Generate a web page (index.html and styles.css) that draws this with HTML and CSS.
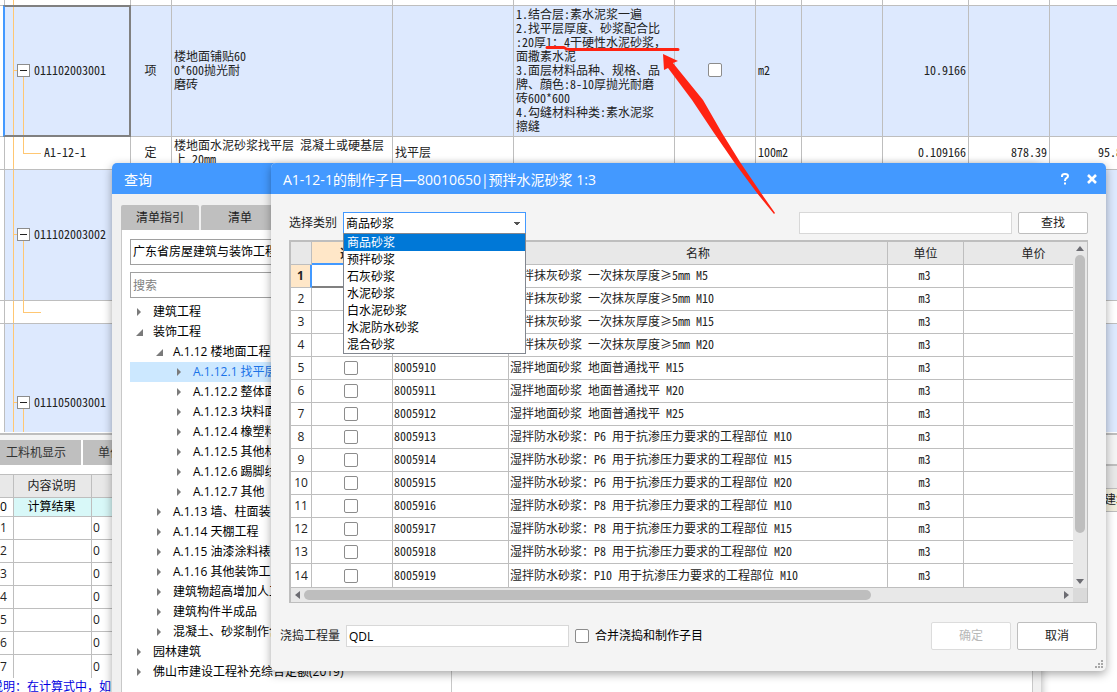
FILE: index.html
```html
<!DOCTYPE html>
<html lang="zh-CN">
<head>
<meta charset="utf-8">
<title>A1-12-1的制作子目</title>
<link rel="stylesheet" href="styles.css">
</head>
<body>
<main class="workspace">
  <div class="bill-wrap">
    <table class="bill">
      <colgroup>
        <col class="b-head"><col class="b-code"><col class="b-kind"><col class="b-name"><col class="b-spec"><col class="b-desc"><col class="b-check"><col class="b-unit"><col class="b-expr"><col class="b-qty"><col class="b-price"><col class="b-total">
      </colgroup>
      <tbody>
        <tr class="r-cut"><td></td><td class="tree"></td><td></td><td></td><td></td><td></td><td></td><td></td><td></td><td></td><td></td><td></td></tr>
        <tr class="r-item">
          <td class="current"></td>
          <td class="tree parent selected"><button class="toggle" aria-label="折叠"></button>011102003001</td>
          <td class="center">项</td>
          <td>楼地面铺贴60<br>0*600抛光耐<br>磨砖</td>
          <td></td>
          <td>1.结合层:素水泥浆一遍<br>2.找平层厚度、砂浆配合比<br>:20厚1：4干硬性水泥砂浆，<br>面撒素水泥<br>3.面层材料品种、规格、品<br>牌、顔色:8-10厚抛光耐磨<br>砖600*600<br>4.勾缝材料种类:素水泥浆<br>擦缝</td>
          <td class="center"><input type="checkbox" class="check" aria-label="011102003001"></td>
          <td>m2</td><td></td><td class="num">10.9166</td><td></td><td></td>
        </tr>
        <tr class="r-quota">
          <td></td><td class="tree child">A1-12-1</td><td class="center">定</td><td>楼地面水泥砂浆找平层 混凝土或硬基层<br>上 20mm</td><td>找平层</td><td></td><td></td><td>100m2</td><td></td><td class="num">0.109166</td><td class="num">878.39</td><td class="num">95.8</td>
        </tr>
        <tr class="r-item">
          <td></td><td class="tree parent"><button class="toggle" aria-label="折叠"></button>011102003002</td><td></td><td></td><td></td><td></td><td></td><td></td><td></td><td></td><td></td><td></td>
        </tr>
        <tr class="r-blank"><td></td><td class="tree child"></td><td></td><td></td><td></td><td></td><td></td><td></td><td></td><td></td><td></td><td></td></tr>
        <tr class="r-item r-last">
          <td></td><td class="tree parent"><button class="toggle" aria-label="折叠"></button>011105003001</td><td></td><td></td><td></td><td></td><td></td><td></td><td></td><td></td><td></td><td></td>
        </tr>
      </tbody>
    </table>
  </div>
  <div class="lower">
    <section class="lower-left">
      <div class="lower-tabs"><button class="ltab">工料机显示</button><button class="ltab">单价构成</button></div>
      <table class="calc">
        <colgroup><col class="c-row"><col class="c-text"><col></colgroup>
        <thead><tr><th></th><th>内容说明</th><th></th></tr></thead>
        <tbody>
          <tr class="result"><td>0</td><td>计算结果</td><td></td></tr>
          <tr><td>1</td><td></td><td>0</td></tr>
          <tr><td>2</td><td></td><td>0</td></tr>
          <tr><td>3</td><td></td><td>0</td></tr>
          <tr><td>4</td><td></td><td>0</td></tr>
          <tr><td>5</td><td></td><td>0</td></tr>
          <tr><td>6</td><td></td><td>0</td></tr>
          <tr><td>7</td><td></td><td>0</td></tr>
        </tbody>
      </table>
      <p class="note">说明：在计算式中，如</p>
    </section>
    <section class="lower-right">
      <div class="strip-head"></div>
      <div class="strip-row"><span>建筑</span></div>
    </section>
  </div>
</main>

<section class="window query">
  <header class="titlebar"><h2>查询</h2></header>
  <div class="query-body">
    <div class="tabs"><button class="tab">清单指引</button><button class="tab">清单</button></div>
    <div class="query-panes">
      <div class="pane-tree">
        <button class="book">广东省房屋建筑与装饰工程</button>
        <input class="find" type="text" placeholder="搜索" aria-label="搜索">
        <ul class="nodes">
          <li class="l0">建筑工程</li>
          <li class="l0 open">装饰工程</li>
          <li class="l1 open">A.1.12 楼地面工程</li>
          <li class="l2 active">A.1.12.1 找平层</li>
          <li class="l2">A.1.12.2 整体面</li>
          <li class="l2">A.1.12.3 块料面</li>
          <li class="l2">A.1.12.4 橡塑料</li>
          <li class="l2">A.1.12.5 其他材</li>
          <li class="l2">A.1.12.6 踢脚线</li>
          <li class="l2">A.1.12.7 其他</li>
          <li class="l1">A.1.13 墙、柱面装</li>
          <li class="l1">A.1.14 天棚工程</li>
          <li class="l1">A.1.15 油漆涂料裱</li>
          <li class="l1">A.1.16 其他装饰工</li>
          <li class="l1">建筑物超高增加人工</li>
          <li class="l1">建筑构件半成品</li>
          <li class="l1">混凝土、砂浆制作含</li>
          <li class="l0">园林建筑</li>
          <li class="l0">佛山市建设工程补充综合定额(2019)</li>
        </ul>
      </div>
      <div class="pane-list"></div>
    </div>
  </div>
</section>

<section class="window dialog" role="dialog" aria-labelledby="dialog-title">
  <header class="titlebar">
    <h2 id="dialog-title">A1-12-1的制作子目—80010650|预拌水泥砂浆 1:3</h2>
    <button class="winbtn" aria-label="帮助"><svg width="8" height="12" viewBox="0 0 8 12"><path d="M1 4V3Q1 1 4 1T7 3Q7 4.300 5.400 5.200Q4 6 4 8" fill="none" stroke="#fff" stroke-width="2"/><path d="M3 9.500h2v2H3z" fill="#fff"/></svg></button>
    <button class="winbtn" aria-label="关闭"><svg width="10" height="10" viewBox="0 0 10 10"><path d="M1 1L9 9M9 1L1 9" stroke="#fff" stroke-width="2.600"/></svg></button>
  </header>
  <div class="dialog-body">
    <div class="toolbar">
      <label for="kind">选择类别</label>
      <div class="combo">
        <select id="kind"><option>商品砂浆</option><option>预拌砂浆</option><option>石灰砂浆</option><option>水泥砂浆</option><option>白水泥砂浆</option><option>水泥防水砂浆</option><option>混合砂浆</option></select>
        <ul class="popup" role="listbox" aria-label="选择类别">
          <li role="option" aria-selected="true">商品砂浆</li>
          <li role="option">预拌砂浆</li>
          <li role="option">石灰砂浆</li>
          <li role="option">水泥砂浆</li>
          <li role="option">白水泥砂浆</li>
          <li role="option">水泥防水砂浆</li>
          <li role="option">混合砂浆</li>
        </ul>
      </div>
      <input class="search" type="text" aria-label="查找内容">
      <button class="btn">查找</button>
    </div>
    <div class="grid">
      <div class="grid-view">
        <table class="mix">
          <colgroup><col class="m-no"><col class="m-check"><col class="m-code"><col><col class="m-unit"><col class="m-price"></colgroup>
          <thead><tr><th></th><th class="hot">选择</th><th></th><th>名称</th><th>单位</th><th>单价</th></tr></thead>
          <tbody>
            <tr class="on"><td>1</td><td><input type="checkbox" class="check" aria-label="1"></td><td></td><td>湿拌抹灰砂浆 一次抹灰厚度≥5mm M5</td><td>m3</td><td></td></tr>
            <tr><td>2</td><td><input type="checkbox" class="check" aria-label="2"></td><td></td><td>湿拌抹灰砂浆 一次抹灰厚度≥5mm M10</td><td>m3</td><td></td></tr>
            <tr><td>3</td><td><input type="checkbox" class="check" aria-label="3"></td><td></td><td>湿拌抹灰砂浆 一次抹灰厚度≥5mm M15</td><td>m3</td><td></td></tr>
            <tr><td>4</td><td><input type="checkbox" class="check" aria-label="4"></td><td></td><td>湿拌抹灰砂浆 一次抹灰厚度≥5mm M20</td><td>m3</td><td></td></tr>
            <tr><td>5</td><td><input type="checkbox" class="check" aria-label="5"></td><td>8005910</td><td>湿拌地面砂浆 地面普通找平 M15</td><td>m3</td><td></td></tr>
            <tr><td>6</td><td><input type="checkbox" class="check" aria-label="6"></td><td>8005911</td><td>湿拌地面砂浆 地面普通找平 M20</td><td>m3</td><td></td></tr>
            <tr><td>7</td><td><input type="checkbox" class="check" aria-label="7"></td><td>8005912</td><td>湿拌地面砂浆 地面普通找平 M25</td><td>m3</td><td></td></tr>
            <tr><td>8</td><td><input type="checkbox" class="check" aria-label="8"></td><td>8005913</td><td>湿拌防水砂浆：P6 用于抗渗压力要求的工程部位 M10</td><td>m3</td><td></td></tr>
            <tr><td>9</td><td><input type="checkbox" class="check" aria-label="9"></td><td>8005914</td><td>湿拌防水砂浆：P6 用于抗渗压力要求的工程部位 M15</td><td>m3</td><td></td></tr>
            <tr><td>10</td><td><input type="checkbox" class="check" aria-label="10"></td><td>8005915</td><td>湿拌防水砂浆：P6 用于抗渗压力要求的工程部位 M20</td><td>m3</td><td></td></tr>
            <tr><td>11</td><td><input type="checkbox" class="check" aria-label="11"></td><td>8005916</td><td>湿拌防水砂浆：P8 用于抗渗压力要求的工程部位 M10</td><td>m3</td><td></td></tr>
            <tr><td>12</td><td><input type="checkbox" class="check" aria-label="12"></td><td>8005917</td><td>湿拌防水砂浆：P8 用于抗渗压力要求的工程部位 M15</td><td>m3</td><td></td></tr>
            <tr><td>13</td><td><input type="checkbox" class="check" aria-label="13"></td><td>8005918</td><td>湿拌防水砂浆：P8 用于抗渗压力要求的工程部位 M20</td><td>m3</td><td></td></tr>
            <tr><td>14</td><td><input type="checkbox" class="check" aria-label="14"></td><td>8005919</td><td>湿拌防水砂浆：P10 用于抗渗压力要求的工程部位 M10</td><td>m3</td><td></td></tr>
          </tbody>
        </table>
      </div>
      <div class="vscroll">
        <svg width="8" height="5" viewBox="0 0 8 5"><path d="M4 0L8 5H0z"/></svg>
        <div class="track"><div class="thumb"></div></div>
        <svg width="8" height="5" viewBox="0 0 8 5"><path d="M4 5L8 0H0z"/></svg>
      </div>
      <div class="hscroll">
        <svg width="5" height="8" viewBox="0 0 5 8"><path d="M0 4L5 0V8z"/></svg>
        <div class="track"><div class="thumb"></div></div>
        <svg width="5" height="8" viewBox="0 0 5 8"><path d="M5 4L0 0V8z"/></svg>
      </div>
      <div class="corner"></div>
    </div>
  </div>
  <footer class="dialog-foot">
    <label for="amount">浇捣工程量</label>
    <input id="amount" class="amount" type="text" value="QDL">
    <input id="merge" class="check" type="checkbox">
    <label for="merge" class="merge">合并浇捣和制作子目</label>
    <button class="btn wide" disabled>确定</button>
    <button class="btn wide">取消</button>
  </footer>
  <svg class="grip" width="8" height="8" viewBox="0 0 8 8"><path d="M6 0h2v2H6zM3 3h2v2H3zM6 3h2v2H6zM0 6h2v2H0zM3 6h2v2H3zM6 6h2v2H6z" fill="#a8a8a8"/></svg>
</section>

<svg class="markup" width="240" height="180" viewBox="540 40 240 180" aria-hidden="true">
  <path d="M547 47.500L564 47.500Q566 49.500 570 49.500L678 49.500" fill="none" stroke="#ff2312" stroke-width="3" stroke-linecap="round" stroke-linejoin="round"/>
  <path d="M663 54L678 61L673 63L703 100L722 133L740 162L761 193L775 213L774 214L757 193L734 162L714 133L692 100L668 68L664 70z" fill="#ff2312"/>
</svg>
</body>
</html>
```
FILE: styles.css
```css
* { box-sizing: border-box; }

body {
  --line: #bebebe;
  --blue: #4399ff;
  --row: #dde9fe;
  --ui: "Open Sans", "Noto Sans CJK SC", sans-serif;
  --cell: "Noto Sans Mono CJK SC", "Noto Sans CJK SC", sans-serif;
  margin: 0;
  height: 100vh;
  position: relative;
  overflow: hidden;
  background: #fff;
  color: #222;
  font: 12px/16px var(--ui);
}

button, input, select { font: inherit; color: inherit; margin: 0; padding: 0; }
button { background: none; border: 0; }
h2, p, ul { margin: 0; padding: 0; font-weight: normal; list-style: none; }
table { border-collapse: separate; border-spacing: 0; table-layout: fixed; }
td, th { padding: 0; font-weight: normal; border: 0 solid var(--line); border-width: 0 1px 1px 0; white-space: nowrap; }

.check {
  appearance: none;
  display: block;
  flex: none;
  width: 14px;
  height: 14px;
  border: 1px solid #8c8c8c;
  border-radius: 2px;
  background: #fff;
}

/* bill of quantities */
.workspace { display: flex; flex-direction: column; height: 100%; overflow: hidden; }
.bill-wrap { flex: none; overflow: hidden; border-bottom: 2px solid var(--line); padding-bottom: 1px; }
.bill { width: calc(100% + 8px); font: 12px/14px var(--cell); }
.bill td { padding: 0 0 2px 2px; }
.bill .center { text-align: center; padding: 0 1px 2px 0; }
.bill .center .check { margin: 0 auto; }
.bill .num { text-align: right; padding-right: 2px; }
.b-head { width: 5px; }
.b-code { width: 126px; }
.b-kind { width: 41px; }
.b-name { width: 221px; }
.b-spec { width: 121px; }
.b-desc { width: 161px; }
.b-check { width: 81px; }
.b-unit { width: 46px; }
.b-expr { width: 81px; }
.b-qty { width: 86px; }
.b-price { width: 81px; }
.r-cut { height: 6px; }
.r-item { height: 131px; background: var(--row); }
.r-quota { height: 33px; }
.r-blank { height: 23px; }
.r-last { height: 108px; }
.r-item td:first-child { background: #fff; }
.r-last td { border-bottom: 0; }
.bill .r-last .tree { padding-top: 49px; }
.r-item .current { background: #ffe7c8; }

.bill .tree {
  position: relative;
  padding-left: 29px;
  background: linear-gradient(#ffc773, #ffc773) 8px 0 / 1px 100% no-repeat;
}
.bill .child { padding-left: 39px; }
.bill .tree::before, .bill .tree::after { position: absolute; }
.bill .child::before {
  content: "";
  left: 18px;
  top: 0;
  width: 17px;
  height: 50%;
  border: solid #ffc773;
  border-width: 0 0 1px 1px;
}
.bill .parent::before {
  content: "";
  left: 18px;
  top: 50%;
  bottom: -1px;
  width: 1px;
  background: #ffc773;
}
.bill .r-last .parent::before { top: 78px; bottom: 0; }
.bill .selected::after { content: ""; inset: -1px -1px -1px -2px; border: 2px solid #808080; border-left-color: var(--blue); }
.toggle {
  position: relative;
  float: left;
  width: 13px;
  height: 13px;
  margin-top: 1px;
  margin-left: -17px;
  border: 1px solid #8c8c8c;
  background: linear-gradient(#222, #222) center / 7px 1px no-repeat #fff;
}
.toggle::before { content: ""; position: absolute; left: -5px; top: 5px; width: 4px; height: 1px; background: #ffc773; }

/* lower area */
.lower { flex: 1; display: flex; background: #f4f4f4; }
.lower-left { width: 162px; display: flex; flex-direction: column; padding-top: 5px; }
.lower-tabs { display: flex; gap: 2px; background: #fff; }
.ltab { height: 25px; padding: 0 15px; background: #bfbfbf; color: #333; white-space: nowrap; }
.ltab:first-child { padding-left: 6px; }
.calc { width: 100%; margin-top: 9px; border-top: 1px solid var(--line); box-shadow: 0 -9px #fff; background: #fff; }
.c-row { width: 14px; }
.c-text { width: 78px; }
.calc th { height: 23px; background: #e8e8e8; }
.calc td { height: 23px; }
.calc .result td { height: 19px; background: #d8f8f8; color: #000; }
.calc td:first-child, .calc .result td:first-child { background: #fff; }
.calc td:nth-child(2) { text-align: center; }
.calc td:nth-child(3) { padding-left: 1px; }
.calc tbody tr:last-child td { border-bottom: 0; }
.calc th, .calc .result td { padding-right: 2px; }
.note { flex: 1; background: #fff; color: #0000e0; padding-top: 1px; margin-left: -9px; white-space: nowrap; }
.lower-right { flex: 1; margin-top: 29px; border-top: 2px solid var(--line); background: #fff; }
.strip-head { height: 23px; background: #e8e8e8; border-bottom: 1px solid var(--line); }
.strip-row { display: flex; align-items: center; justify-content: flex-end; height: 23px; background: #f1eedd; border-bottom: 1px solid var(--line); }
.strip-row span { margin-right: -11px; }

/* windows */
.window { position: absolute; display: flex; flex-direction: column; border-radius: 5px; box-shadow: 0 3px 10px rgba(0, 0, 0, .35); }
.titlebar { display: flex; align-items: center; flex: none; height: 31px; padding: 2px 8px 0 12px; background: var(--blue); color: #fff; border-radius: 5px 5px 0 0; }
.titlebar h2 { flex: 1; font-size: 14px; line-height: 20px; }
.winbtn { display: flex; justify-content: center; width: 13px; margin-left: 14px; padding-bottom: 2px; }

.query { left: 112px; right: 76px; top: 163px; bottom: -10px; background: #f0f0f0; }
.query-body { flex: 1; display: flex; flex-direction: column; padding: 11px 8px 0 9px; }
.tabs { display: flex; gap: 2px; }
.tab { width: 78px; height: 25px; background: #bfbfbf; border-radius: 2px 2px 0 0; }
.query-panes { flex: 1; display: flex; background: #fff; border: solid #c8c8c8; border-width: 0 1px; }
.pane-tree { width: 330px; padding: 9px 9px 0 8px; border-right: 1px solid #c8c8c8; }
.book, .find { display: block; width: 100%; height: 26px; padding: 0 2px; border: 1px solid #a0a0a0; background: #fff; text-align: left; color: #000; }
.find { margin-top: 7px; }
.find::placeholder { color: #808080; opacity: 1; }
.nodes { margin-top: 4px; color: #000; }
.nodes li { height: 20px; line-height: 20px; white-space: nowrap; }
.nodes li::before { content: ""; display: inline-block; width: 4px; height: 8px; margin-right: 12px; background: #7a7a7a; clip-path: polygon(0 0, 100% 50%, 0 100%); }
.nodes .open::before { width: 7px; height: 7px; margin-right: 10px; margin-left: -1px; clip-path: polygon(100% 0, 100% 100%, 0 100%); }
.l0 { padding-left: 7px; }
.l1 { padding-left: 27px; }
.l2 { padding-left: 47px; }
.nodes .active { background: #cce8ff; color: #1a73e8; }

.dialog { left: 271px; right: 11px; top: 163px; background: #f4f4f4; }
.dialog-body { padding: 18px 18px 0; }
.toolbar { display: flex; align-items: center; height: 22px; }
.combo { position: relative; width: 183px; margin: 0 auto 0 6px; }
.combo select {
  appearance: none;
  display: block;
  width: 100%;
  height: 22px;
  padding: 2px 0 0 2px;
  border: 1px solid var(--blue);
  border-radius: 0;
  color: #000;
  background: linear-gradient(#555, #555) right 5px top 9px / 6px 1px no-repeat, linear-gradient(#555, #555) right 6px top 10px / 4px 1px no-repeat, linear-gradient(#555, #555) right 7px top 11px / 2px 1px no-repeat, #fff;
}
.popup { position: absolute; z-index: 2; top: 21px; left: 0; width: 100%; border: 1px solid #828790; background: #fff; color: #000; }
.popup li { height: 17px; line-height: 17px; padding-left: 3px; }
.popup [aria-selected="true"] { background: #0078d7; color: #fff; }
.search { width: 213px; height: 22px; border: 1px solid #d8d8d8; background: #fff; }
.btn { width: 70px; height: 22px; margin-left: 6px; border: 1px solid var(--line); border-radius: 2px; background: #fff; }
.btn.wide { width: 80px; height: 28px; }
.btn:disabled { color: #b8b8b8; border-color: #dcdcdc; }

.grid { display: grid; grid-template-columns: 1fr 14px; grid-template-rows: auto 14px; margin-top: 6px; border: solid var(--line); border-width: 2px 1px 1px 2px; background: #e8e8e8; }
.grid-view { overflow: hidden; background: #fff; border-bottom: 1px solid var(--line); }
.mix { width: calc(100% + 31px); font: 12px/14px var(--cell); }
.mix th { height: 23px; background: #e8e8e8; }
.mix td { height: 23px; padding: 0 0 2px 1px; }
.mix td:nth-child(1) { padding: 0; text-align: center; font-family: var(--ui); }
.mix td:nth-child(2) { padding: 0 2px 0 0; }
.mix td:nth-child(5) { padding: 0 2px 2px 0; text-align: center; }
.mix td .check { margin: 0 auto; }
.mix tr:last-child td { border-bottom-width: 0; }
.m-no { width: 21px; }
.m-check { width: 81px; }
.m-code { width: 116px; }
.m-unit { width: 76px; }
.m-price { width: 140px; }
.mix .hot { background: #ffe7c8; font-weight: bold; border-bottom: 2px solid var(--blue); }
.mix .on td:first-child { background: #ffe7c8; font-weight: bold; border-right: 2px solid var(--blue); }
.mix .on td:nth-child(2) { border-bottom: 2px solid #808080; }
.vscroll, .hscroll { display: flex; align-items: center; fill: #6c6c72; }
.vscroll { flex-direction: column; padding: 4px 0; }
.hscroll { padding: 0 4px; }
.track { flex: 1; margin: 4px 4px; }
.vscroll .track { width: 10px; }
.hscroll .track { height: 10px; }
.thumb { background: var(--line); border-radius: 5px; }
.vscroll .thumb { height: 87%; }
.hscroll .thumb { width: 75%; height: 100%; }
.corner { background: #dadada; }

.dialog-foot { display: flex; align-items: center; padding: 19px 9px 21px; }
.amount { width: 223px; height: 22px; margin: 0 6px; padding: 0 2px; border: 1px solid #d8d8d8; background: #fff; color: #000; }
.merge { margin: 0 auto 0 6px; color: #000; }
.grip { position: absolute; right: 3px; bottom: 3px; }

.markup { position: absolute; left: 540px; top: 40px; pointer-events: none; }
```
